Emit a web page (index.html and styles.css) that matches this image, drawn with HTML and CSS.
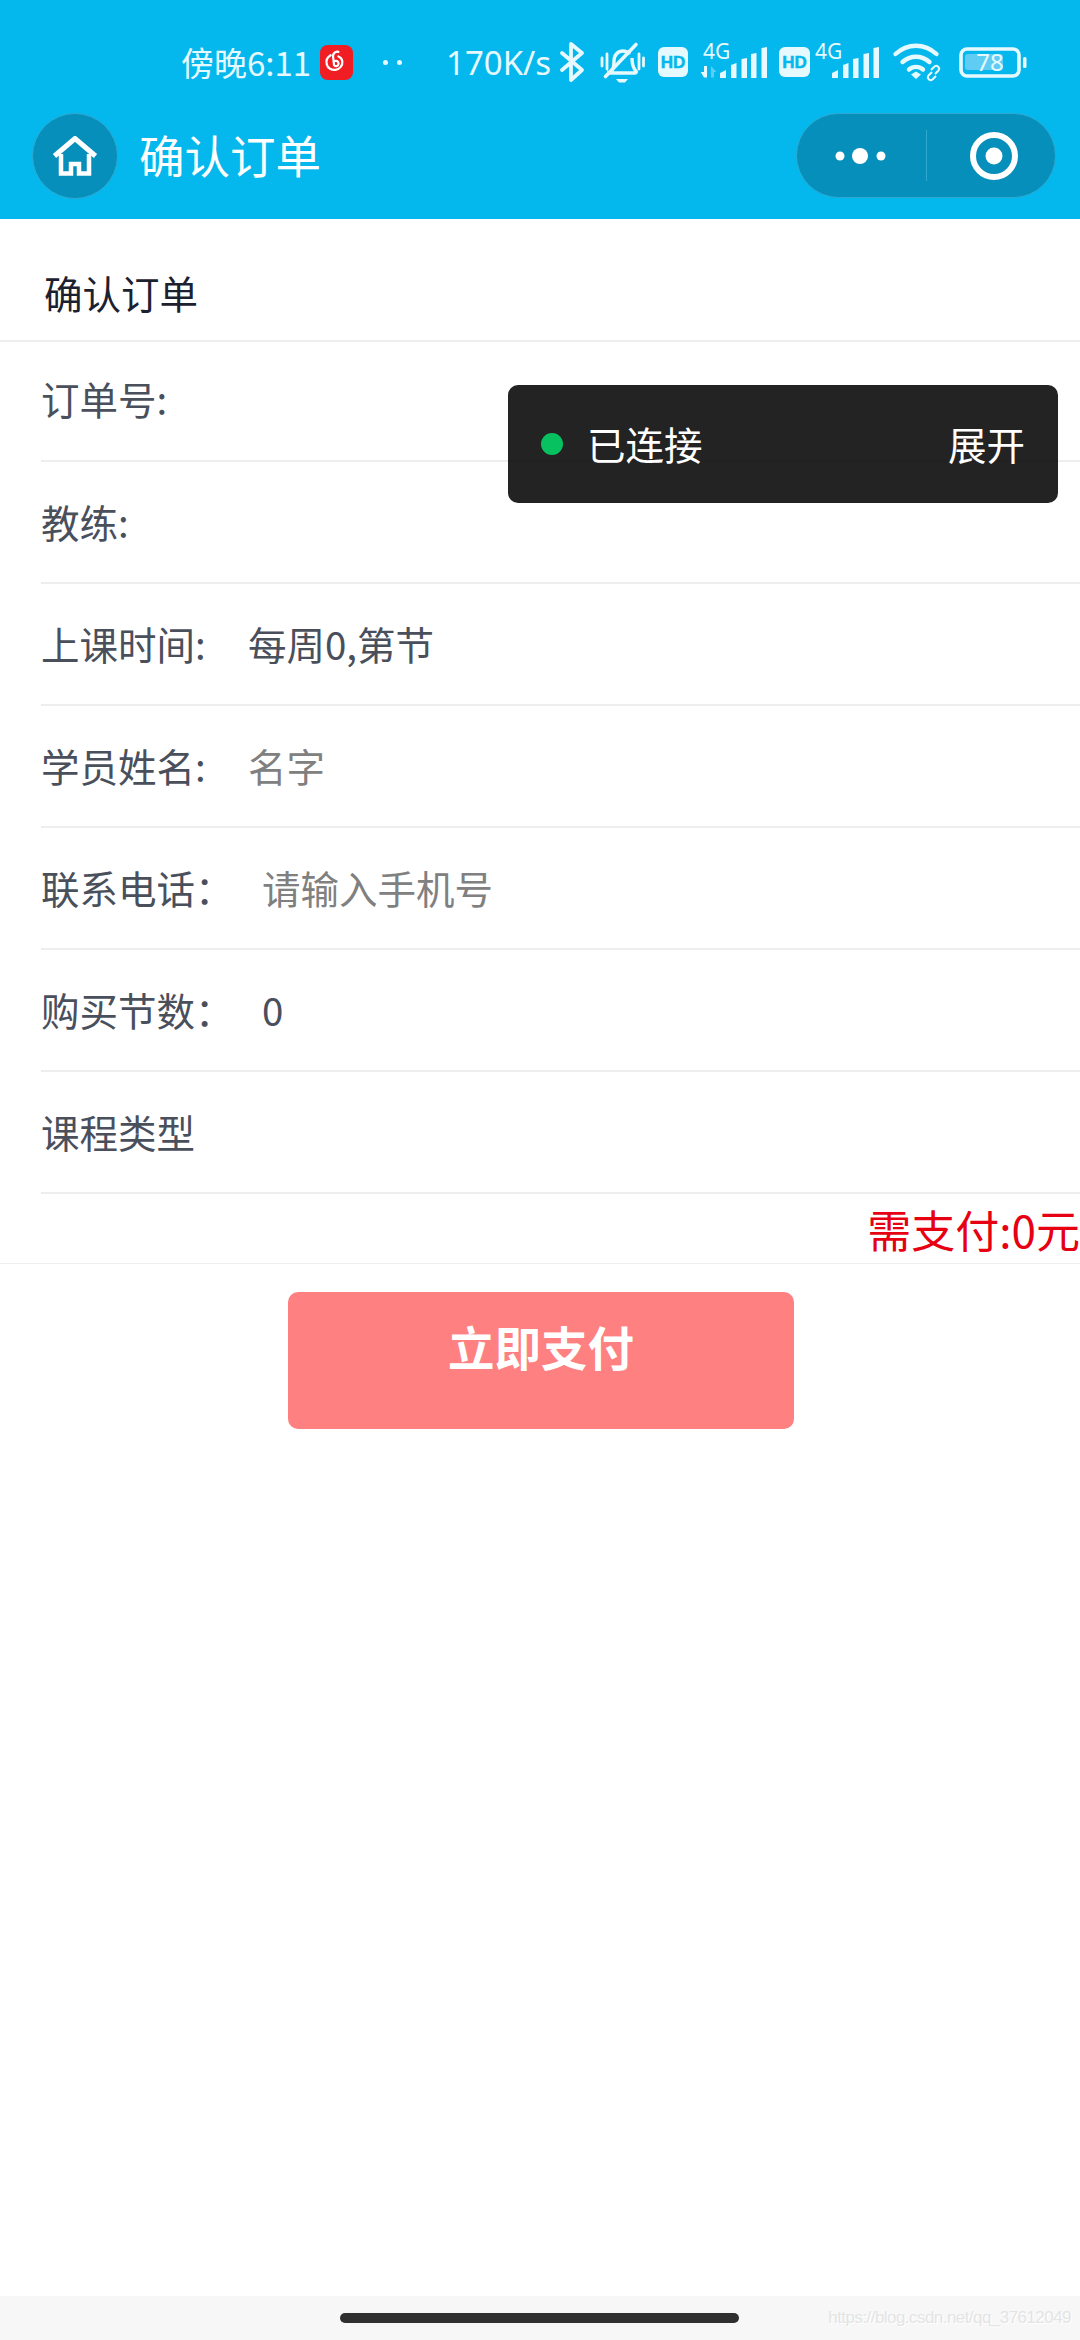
FILE: index.html
```html
<!DOCTYPE html>
<html lang="zh-CN">
<head>
  <meta charset="UTF-8">
  <title>确认订单</title>
  <link rel="stylesheet" href="styles.css">
</head>
<body>

  <header class="header">
    <div class="status">
      <span class="status-time">傍晚6:11</span>
      <svg class="status-app" viewBox="0 0 34 36">
        <rect width="34" height="36" rx="8" fill="#f01e22"/>
        <path d="M19 7c-2-.6-5 .5-5.500 3.500-.4 3 1 6 .8 9-.1 1.500 1.200 2.500 2.700 2.200 1.800-.4 2.600-2.400 1.800-4-.9-1.600-3.300-1.700-4.800-.6M11 10.500C7.500 12.500 6 16 7 20c1 3.700 5 6.200 9 5.500 4.500-.7 7.500-4.500 7-8.700-.3-2.500-2-4.300-4-5" fill="none" stroke="#fff" stroke-width="2.300" stroke-linecap="round"/>
      </svg>
      <span class="status-dots">
        <i></i>
        <i></i>
      </span>
      <span class="status-speed">170K/s</span>
      <svg class="status-icons" viewBox="0 0 479 48" width="479" height="48">
        <!-- bluetooth -->
        <path d="M6 15L26 32L15 42V6L26 15L6 32" fill="none" stroke="#e6f9ff" stroke-width="3.800" stroke-linejoin="round" stroke-linecap="round"/>
        <!-- silent bell -->
        <path d="M55 34c3-3 3-7 3-11 0-6 4-10 9-10 3 0 5 1 7 3M76 20c0 7 1 10 4 13 1 1 0 2-1 2H54c-1 0-2-.5-1-2" fill="none" stroke="#e6f9ff" stroke-width="3.400"/>
        <path d="M49.500 38.500L80 6.500" stroke="#e6f9ff" stroke-width="3.600" stroke-linecap="round"/>
        <path d="M46 20v8M51 16v15M83 16v15M87.500 20v8" stroke="#e6f9ff" stroke-width="2.800" stroke-linecap="round"/>
        <path d="M60 41h12l-3 3.500h-6z" fill="#e6f9ff"/>
        <!-- first sim -->
        <rect x="102" y="9" width="30" height="30" rx="6" fill="#e6f9ff"/>
        <text x="117" y="30" class="icon-hd" text-anchor="middle">HD</text>
        <text x="147" y="21" class="icon-net">4G</text>
        <path d="M151 28V39.500H148L144.700 34H148V28z" fill="#e6f9ff"/>
        <path d="M155 39.500V28L160.500 34H158V39.500z" fill="#5fcdf3"/>
        <path d="M164 40v-5l6-3v8zM175 40V27l5.500-2v15zM185.500 40V21l5.500-1v20zM195 40V16l5.500-1v25zM205.500 40V10l5.500-1v31z" fill="#e6f9ff"/>
        <!-- second sim -->
        <rect x="223" y="9" width="31" height="30" rx="6" fill="#e6f9ff"/>
        <text x="238.500" y="30" class="icon-hd" text-anchor="middle">HD</text>
        <text x="259" y="21" class="icon-net">4G</text>
        <path d="M276 40v-5l6-3v8zM287 40V27l5.500-2v15zM297 40V21l5.500-1v20zM307.500 40V16l5.500-1v25zM317.500 40V10l5.500-1v31z" fill="#e6f9ff"/>
        <!-- wifi -->
        <path d="M339.500 16c12-11 29-11 41 0M346.500 24c8-7 19-7 27 0M353 31.500c4-3.500 10-3.500 14 0" fill="none" stroke="#e6f9ff" stroke-width="4.400" stroke-linecap="round"/>
        <path d="M355 36.500l5-3 5 3-5 4.500z" fill="#e6f9ff"/>
        <path d="M376 34l-3.500 3.500c-2 2.500 1.500 6 4 4l3.500-3.500M379 36l3.500-3.500c2-2.500-1.500-6-4-4L375 32" fill="none" stroke="#e6f9ff" stroke-width="2"/>
        <!-- battery -->
        <rect x="405" y="11" width="58" height="27" rx="6" fill="none" stroke="#e6f9ff" stroke-width="3.600"/>
        <rect x="409" y="16" width="38" height="16" rx="3" fill="#5fcdf3"/>
        <text x="434" y="33" class="icon-battery" text-anchor="middle">78</text>
        <rect x="467" y="19" width="3.500" height="11" rx="1.500" fill="#e6f9ff"/>
      </svg>
    </div>
    <div class="nav">
      <div class="nav-home">
        <svg viewBox="0 0 46 40" width="46" height="40">
          <path d="M2.500 20L23 2.500L43.500 20" fill="none" stroke="#fff" stroke-width="5"/>
          <path d="M9 18V37.500H19V28H27V37.500H37V18" fill="none" stroke="#fff" stroke-width="4.500"/>
        </svg>
      </div>
      <div class="nav-title">确认订单</div>
      <div class="capsule">
        <div class="capsule-more">
          <svg viewBox="0 0 52 18" width="52" height="18">
            <circle cx="5" cy="9" r="4.500" fill="#fff"/>
            <circle cx="25" cy="9" r="8" fill="#fff"/>
            <circle cx="46" cy="9" r="4.500" fill="#fff"/>
          </svg>
        </div>
        <div class="capsule-close">
          <svg viewBox="0 0 48 48" width="48" height="48">
            <circle cx="24" cy="24" r="21" fill="none" stroke="#fff" stroke-width="6"/>
            <circle cx="24" cy="24" r="8.500" fill="#fff"/>
          </svg>
        </div>
      </div>
    </div>
  </header>

  <main class="page">
    <div class="page-title">确认订单</div>

    <div class="row">
      <span class="row-label">订单号:</span>
    </div>
    <div class="row">
      <span class="row-label">教练:</span>
    </div>
    <div class="row">
      <span class="row-label row-label-time">上课时间:</span>
      <span>每周0,第节</span>
    </div>
    <div class="row">
      <span class="row-label row-label-time">学员姓名:</span>
      <span class="placeholder">名字</span>
    </div>
    <div class="row">
      <span class="row-label row-label-wide">联系电话：</span>
      <span class="placeholder">请输入手机号</span>
    </div>
    <div class="row">
      <span class="row-label row-label-wide">购买节数：</span>
      <span>0</span>
    </div>
    <div class="row">
      <span class="row-label">课程类型</span>
    </div>

    <div class="amount">需支付:0元</div>

    <div class="pay-wrap">
      <button class="pay-btn">立即支付</button>
    </div>

    <div class="toast">
      <i class="toast-dot"></i>
      <span class="toast-text">已连接</span>
      <span>展开</span>
    </div>
  </main>

  <footer class="bottom-bar">
    <div class="home-pill"></div>
    <span class="watermark">https://blog.csdn.net/qq_37612049</span>
  </footer>

</body>
</html>
```

FILE: styles.css
```css
* {
  box-sizing: border-box;
}

body {
  margin: 0;
  width: 1080px;
  height: 2340px;
  display: flex;
  flex-direction: column;
  background: #fff;
  font-family: "Noto Sans CJK SC", "Noto Sans", sans-serif;
  overflow: hidden;
}

.header {
  height: 219px;
  background: #04b7ec;
  color: #fff;
}

.status {
  height: 115px;
  padding: 9px 0 0 181px;
  display: flex;
  align-items: center;
  color: #e6f9ff;
}

.status-time {
  font-size: 33px;
  line-height: 40px;
  width: 139px;
  white-space: nowrap;
}

.status-app {
  width: 33px;
  height: 35px;
}

.status-dots {
  display: flex;
  gap: 9px;
  margin-left: 30px;
  width: 63px;
}

.status-dots i {
  width: 5px;
  height: 5px;
  border-radius: 50%;
  background: #e6f9ff;
}

.status-speed {
  font-family: "Noto Sans", sans-serif;
  font-size: 33px;
  width: 110px;
  white-space: nowrap;
}

.status-icons {
  flex: none;
}

.icon-hd {
  font-family: "Liberation Sans", sans-serif;
  font-size: 17px;
  font-weight: 700;
  fill: #04b7ec;
  stroke: #04b7ec;
  stroke-width: 0.5px;
}

.icon-net {
  font-family: "Noto Sans", sans-serif;
  font-size: 21px;
  fill: #e6f9ff;
}

.icon-battery {
  font-family: "Noto Sans", sans-serif;
  font-size: 24px;
  fill: #e6f9ff;
}

.nav {
  height: 104px;
  padding: 0 24px 23px 32px;
  display: flex;
  align-items: center;
}

.nav-home {
  width: 86px;
  height: 86px;
  border-radius: 50%;
  border: 1px solid #2fa9d0;
  background: #058fba;
  display: flex;
  align-items: center;
  justify-content: center;
}

.nav-title {
  margin-left: 21px;
  font-size: 45.500px;
  line-height: 60px;
  padding-bottom: 4px;
  flex: 1;
}

.capsule {
  width: 260px;
  height: 85px;
  border-radius: 43px;
  border: 1px solid #2fa9d0;
  background: #058fba;
  display: flex;
  align-items: center;
}

.capsule-more {
  width: 130px;
  height: 51px;
  padding-left: 38px;
  display: flex;
  align-items: center;
  border-right: 1px solid #2fa9d0;
}

.capsule-close {
  flex: 1;
  padding-left: 43px;
  display: flex;
  align-items: center;
}

.page {
  position: relative;
  flex: 1;
}

.page-title {
  height: 123px;
  padding: 46px 0 0 44px;
  font-size: 38.500px;
  line-height: 54px;
  color: #1c2130;
  border-bottom: 2px solid #eee;
}

.row {
  height: 122px;
  margin-left: 41px;
  padding-bottom: 3px;
  display: flex;
  align-items: center;
  font-size: 38.500px;
  color: #4a4f5c;
  border-bottom: 2px solid #eee;
}

.page-title + .row {
  height: 120px;
  padding-bottom: 6px;
}

.row-label-time {
  width: 207px;
}

.row-label-wide {
  width: 221px;
}

.placeholder {
  color: #808080;
}

.amount {
  height: 70px;
  font-size: 44px;
  line-height: 70px;
  text-align: right;
  color: #e60012;
  white-space: nowrap;
  border-bottom: 1px solid #eee;
}

.pay-wrap {
  padding-top: 28px;
  padding-left: 288px;
}

.pay-btn {
  display: block;
  width: 506px;
  height: 137px;
  padding: 0 0 30px;
  border: 0;
  border-radius: 10px;
  background: #ff8080;
  color: #fff;
  font-family: inherit;
  font-size: 46.500px;
  font-weight: 700;
}

.toast {
  position: absolute;
  top: 166px;
  left: 508px;
  width: 550px;
  height: 118px;
  padding: 0 33px 3px 33px;
  display: flex;
  align-items: center;
  border-radius: 10px;
  background: rgba(0, 0, 0, 0.863);
  color: #fff;
  font-size: 38.500px;
}

.toast-dot {
  width: 22px;
  height: 22px;
  margin-top: 3px;
  border-radius: 50%;
  background: #07c160;
}

.toast-text {
  margin-left: 24px;
  flex: 1;
}

.bottom-bar {
  height: 44px;
  padding: 0 9px 0 340px;
  display: flex;
  align-items: center;
  background: #f7f7f7;
}

.home-pill {
  width: 399px;
  height: 10px;
  border-radius: 5px;
  background: #2f2f2f;
}

.watermark {
  margin-left: auto;
  font-family: "Liberation Sans", sans-serif;
  font-size: 17px;
  letter-spacing: -0.55px;
  color: #e4e4e4;
  text-shadow: 1px 1px 0 #fff;
  white-space: nowrap;
}
```
